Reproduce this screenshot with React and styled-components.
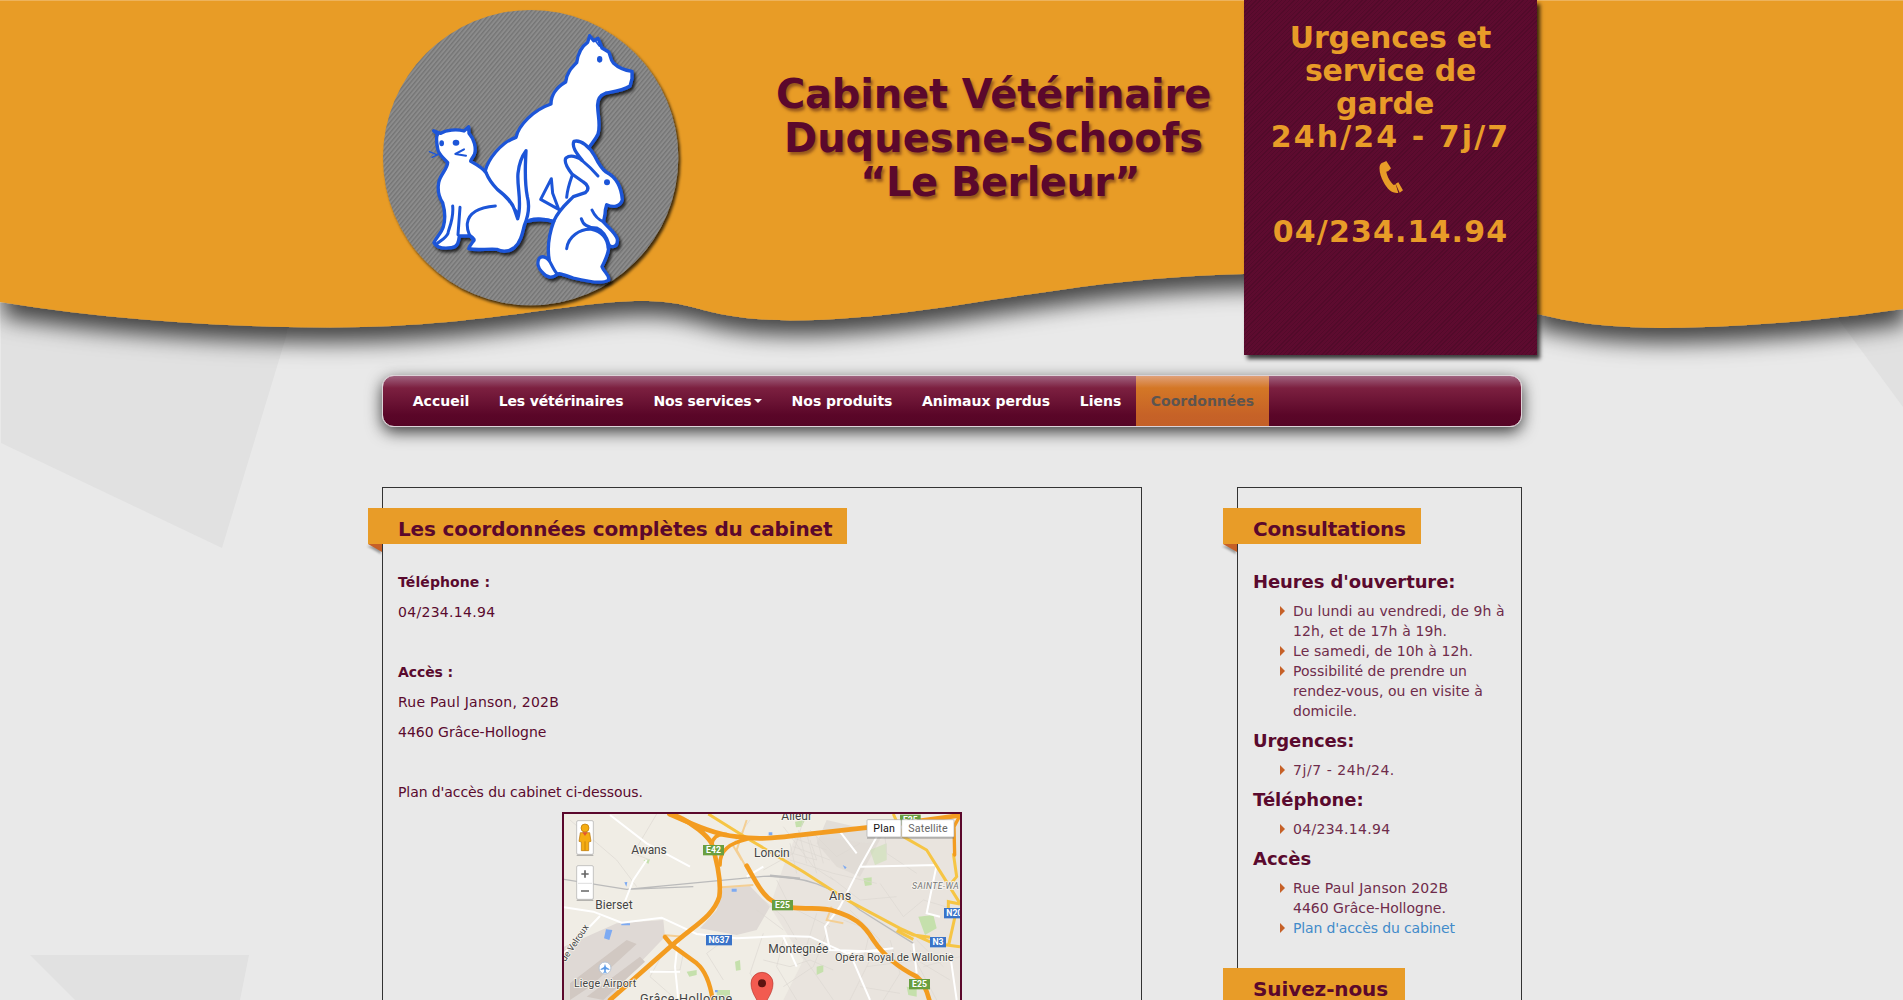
import React from "react";
import styled, { createGlobalStyle } from "styled-components";

const Global = createGlobalStyle`
  * { box-sizing: border-box; }
  html, body { margin: 0; padding: 0; background: #e9e9e9; }
  body {
    font-family: Verdana, "DejaVu Sans", sans-serif;
    font-size: 14px;
    line-height: 20px;
    color: #5a0a2e;
    overflow: hidden;
  }
  h1, h2, h3, p, ul { margin: 0; padding: 0; font-weight: inherit; }
`;

const Page = styled.div`
  position: relative;
  height: 1000px;
  overflow: hidden;
`;
const Backdrop = styled.svg`
  position: absolute;
  top: 0;
  left: 0;
  display: block;
`;
const Container = styled.div`
  position: relative;
  width: 1140px;
  margin-left: 382px;
`;
const Header = styled.header`
  display: flex;
  height: 375px;
  width: 1155px;
`;
const LogoArt = styled.svg`
  display: block;
  flex: none;
  width: 330px;
  height: 320px;
  margin-left: -12px;
`;
const Title = styled.h1`
  display: flex;
  flex-direction: column;
  align-items: center;
  flex: 1;
  padding-top: 72px;
  padding-left: 43px;
  font-size: 40px;
  font-weight: bold;
  line-height: 44px;
  white-space: nowrap;
  color: #5b082c;
  text-shadow: 2px 3px 3px rgba(70, 20, 20, 0.5);
`;
const Emergency = styled.aside`
  display: flex;
  flex-direction: column;
  align-items: center;
  flex: none;
  width: 293px;
  height: 355px;
  padding-top: 21px;
  font-size: 30px;
  font-weight: bold;
  line-height: 33px;
  text-align: center;
  white-space: nowrap;
  color: #e89c28;
  background: repeating-linear-gradient(-45deg, #5d0b2f 0 2px, #520a2a 2px 3px);
  box-shadow: 3px 4px 4px rgba(0, 0, 0, 0.75);
`;
const Tracked = styled.span`
  letter-spacing: ${(p) => p.$track || 0}px;
`;
const Phone = styled.svg`
  width: 24px;
  height: 34px;
  margin: 8px 0 20px;
`;

const Nav = styled.nav`
  display: flex;
  height: 52px;
  width: 1140px;
  padding-left: 15px;
  overflow: hidden;
  border: 1px solid #ddd3d8;
  border-radius: 12px;
  background: linear-gradient(#a0627f 0, #7c2040 12px, #5a0628 39px, #560526 100%);
`;
const NavShadow = styled.div`
  border-radius: 12px;
  box-shadow: 0 5px 16px rgba(0, 0, 0, 0.75);
`;
const NavItem = styled.a`
  display: flex;
  align-items: center;
  justify-content: center;
  flex: none;
  width: ${(p) => p.$w}px;
  padding-bottom: 1px;
  font-weight: bold;
  letter-spacing: ${(p) => p.$track || 0}px;
  white-space: nowrap;
  color: ${(p) => (p.$active ? "#5c5550" : "#fff")};
  background: ${(p) =>
    p.$active ? "linear-gradient(#e0a078 0, #d47726 12px, #c66227 39px, #c46028 100%)" : "none"};
`;
const Caret = styled.i`
  margin-left: 2px;
  border-top: 4px solid #fff;
  border-left: 4px solid transparent;
  border-right: 4px solid transparent;
`;

const Columns = styled.div`
  display: flex;
  justify-content: space-between;
  margin-top: 60px;
`;
const Panel = styled.section`
  width: ${(p) => p.$w}px;
  height: 700px;
  padding: 20px 0 0 15px;
  border: 1px solid #333;
`;
const Ribbon = styled.h2`
  position: relative;
  width: ${(p) => p.$w}px;
  height: 36px;
  margin: ${(p) => p.$top || 0}px 0 ${(p) => p.$gap || 0}px -30px;
  padding: 10px 0 0 30px;
  font-size: 20px;
  font-weight: bold;
  line-height: 22px;
  letter-spacing: ${(p) => p.$track || 0}px;
  white-space: nowrap;
  color: #5b082c;
  background: #e89c28;

  &::after {
    content: "";
    position: absolute;
    left: 0;
    top: 36px;
    border-top: 8px solid #c66027;
    border-left: 14px solid transparent;
    filter: drop-shadow(-1px 2px 1px rgba(0, 0, 0, 0.35));
  }
`;
const Text = styled.p`
  height: 20px;
  margin-bottom: 10px;
  font-weight: ${(p) => (p.$bold ? "bold" : "normal")};
  letter-spacing: ${(p) => p.$track || 0}px;
`;
const SubTitle = styled.h3`
  margin: 10px 0;
  font-size: 18px;
  font-weight: bold;
  line-height: 19px;
  letter-spacing: ${(p) => p.$track || 0}px;
`;
const List = styled.ul`
  padding-left: 40px;
  list-style: none;
  color: #6f2c4b;
`;
const Item = styled.li`
  display: block;
  position: relative;
  white-space: nowrap;
  letter-spacing: ${(p) => p.$track || 0}px;

  &::before {
    content: "";
    position: absolute;
    left: -13px;
    top: 5px;
    border-left: 5px solid #c66027;
    border-top: 5px solid transparent;
    border-bottom: 5px solid transparent;
  }
`;
const Link = styled.a`
  color: #428bca;
`;
const MapFrame = styled.div`
  width: 400px;
  height: 250px;
  margin-left: 164px;
  border: 2px solid #5b082c;
  background: #f0ede5;
  svg { display: block; }
`;

const BLUE = "#1c55d8";

function Logo() {
  return (
    <LogoArt viewBox="0 0 990 960">
      <defs>
        <pattern id="stripes" width="10" height="10" patternUnits="userSpaceOnUse" patternTransform="rotate(40)">
          <rect width="10" height="10" fill="#8c8c8c" />
          <rect width="4" height="10" fill="#747474" />
        </pattern>
        <filter id="soft" x="-10%" y="-10%" width="125%" height="125%">
          <feDropShadow dx="6" dy="8" stdDeviation="4" floodColor="#000" floodOpacity="0.75" />
        </filter>
      </defs>
      <circle cx="482" cy="473" r="443" fill="url(#stripes)" filter="url(#soft)" />
      <g fill="#fff" stroke={BLUE} strokeWidth="10" strokeLinejoin="round" strokeLinecap="round">
        <g filter="url(#soft)">
          <path d="M659 107L671 122L684 115L696 144L716 156C722 166 721 181 730 189C746 204 763 211 786 214L786 236L780 258C760 271 730 275 708 279C688 286 681 302 683 322C684 350 692 376 684 402C676 420 667 428 658 441L650 660L560 668C530 656 500 656 470 664L360 560L346 512C354 480 390 428 438 412C446 376 490 330 543 312C543 290 556 264 587 246C590 220 602 206 620 188C624 160 632 141 653 127Z" />
          <path d="M191 392L203 397L212 400C228 390 260 386 282 393L296 380L297 400C312 416 320 446 313 463C308 474 302 480 302 484C320 494 336 502 348 518C356 538 366 552 382 568C410 590 426 606 434 630L443 656C458 610 440 560 444 520C448 480 462 460 468 452C466 500 462 540 472 590C480 620 474 650 463 676C456 706 450 728 434 742C416 756 396 756 380 748C350 746 320 752 296 746C296 738 310 728 312 718C302 706 298 706 294 708L268 708C266 724 264 742 244 743C222 746 200 744 192 728C198 712 214 700 220 680C226 660 226 636 218 608C206 590 202 572 206 548C210 524 232 508 233 488C220 472 205 464 203 446C200 430 198 410 203 403Z" />
          <path d="M612 424C632 418 658 440 674 468C688 496 696 508 708 516C736 530 754 560 757 600C750 622 728 622 710 614L706 630C706 646 702 656 700 666C716 684 738 700 742 718C744 740 730 744 716 736C718 760 706 778 696 800C702 818 718 822 716 840C700 852 650 844 610 834C584 826 566 816 560 824C546 836 530 832 520 820C504 806 500 788 508 774C518 766 530 772 538 782C530 740 538 700 552 662C566 630 588 612 610 590L646 578C662 566 650 552 640 546L606 522C592 504 580 486 588 474C600 464 620 470 636 480C620 460 604 440 612 424Z" />
        </g>
        <g fill="none" strokeWidth="9">
          <path d="M634 480C646 490 660 500 684 528M606 528C598 550 592 570 590 592M544 536L512 598L566 628L548 580Z" />
          <path d="M480 660C510 650 540 662 552 664M376 618C330 622 296 636 292 670C290 696 302 712 312 722M248 618C252 660 234 690 234 700C228 714 214 720 200 732M270 622L264 704" />
          <path d="M666 630C674 648 686 660 702 666M634 656C640 680 660 684 680 684C700 692 712 716 718 736M590 746C594 710 630 686 664 688C690 694 712 712 714 744M538 782C546 796 552 812 562 822" />
          <path d="M282 448L256 462L288 467" strokeWidth="6" />
          <path d="M178 455L200 464M186 472L204 464" strokeWidth="4" />
          <path d="M676 122L688 138" strokeWidth="5" />
        </g>
        <g fill={BLUE} stroke="none">
          <ellipse cx="689" cy="178" rx="8" ry="10" />
          <ellipse cx="215" cy="430" rx="7" ry="9" />
          <ellipse cx="258" cy="428" rx="10" ry="9" />
          <circle cx="711" cy="547" r="9" />
        </g>
      </g>
    </LogoArt>
  );
}

function Shield({ x, y, w, color, children }) {
  return (
    <g>
      <rect x={x} y={y} width={w} height="31" fill={color} />
      <text x={x + w / 2} y={y + 25} textAnchor="middle" fill="#fff" fontSize="26" fontWeight="bold" stroke="none">
        {children}
      </text>
    </g>
  );
}

function CityMap() {
  return (
    <svg width="396" height="186" viewBox="42 42 1188 558" fontFamily="Roboto, sans-serif">
      <rect x="42" y="42" width="1188" height="558" fill="#f0ede5" />
      <g fill="#dfd9d5">
        <path d="M520 262L600 258L660 320L620 390L560 405L450 385L500 330Z" />
        <path d="M42 440L200 370L340 360L345 410L240 520L180 600L42 600Z" />
        <path d="M830 60L1000 100L930 230L860 200L800 130Z" opacity=".8" />
        <path d="M740 100L950 130L1230 60V600H700L760 480L660 320L700 200Z" opacity=".45" />
      </g>
      <g fill="#d1c8c2">
        <path d="M60 550L230 420L260 432L120 560L60 600ZM110 590L270 470L285 485L160 600Z" />
      </g>
      <g fill="#c5e0ac">
        <path d="M1105 350L1150 345L1160 385L1125 405ZM940 235L965 232V255L945 258ZM555 485L570 480L572 510L558 512ZM410 515L440 510V525L418 530ZM500 570H540V600H500ZM800 500L820 495V515L800 525ZM735 65L765 60L755 80L738 82ZM1070 560L1100 565V590L1075 585ZM280 180L300 178L295 192Z" />
        <path d="M960 150L1010 130V180L975 195Z" opacity=".5" />
      </g>
      <g fill="#7daaf2">
        <path d="M168 388L187 390L178 420L162 415ZM440 85L466 92L460 102ZM656 97H667V106H656ZM223 247L232 246L229 260ZM545 266H560V275H545ZM214 370H240V376H214ZM878 195L890 202L885 208ZM495 570H503V577H495Z" />
      </g>
      <g fill="none" stroke="#dcd8d1" strokeWidth="2">
        <path d="M60 60L200 180L260 260M320 42L250 160L300 180M700 80L790 200L850 240M760 60L730 160L640 210M690 150L800 180L780 120M680 240L720 320L840 380M640 400L600 520L650 600M800 340L760 470L850 600M900 330L990 420L900 600M990 250L1060 350L1120 300L1220 330M950 500L1100 480L1200 540M780 90L860 170L930 130M720 180L850 220L980 250M830 400L790 500L700 560M550 400L470 460L520 540M350 440L300 530L380 600M1000 60L1010 160L1100 220M640 480L720 500L780 480L850 510M1020 420L1050 520L1000 600M700 420L680 500L740 600M640 300L700 350L740 420M840 230L930 300L1040 290" />
        <path d="M720 130L740 220M745 90L770 190M770 100L800 220M800 110L820 190M720 110L830 150M730 140L840 180M1100 420L1180 500M1080 450L1160 600M1120 500L1230 470M930 560L1050 580M600 60L550 130M400 460L390 510L300 515M620 330L700 390M880 360L960 390L940 480" />
      </g>
      <g fill="none" stroke="#bbb" strokeWidth="4">
        <path d="M42 238L230 268L430 260M230 268L640 229C760 225 850 260 930 330L1090 430" />
        <path d="M660 227L750 236" strokeWidth="7" />
      </g>
      <g fill="none" stroke="#fff" strokeWidth="6">
        <path d="M42 322L130 335L215 368L335 353L440 402L560 415L700 408L780 410L890 460L1030 445M180 45L290 130L420 200M150 348L42 460M290 180L250 240L215 330M385 410L375 500L385 600M300 515H390M1000 75L930 200L870 320L825 380L840 450L1000 455M930 200L1160 195M870 95L920 160M1160 195L1130 340L1170 350M900 460L960 600M1090 430L1100 520M700 410L740 500M1200 460L1220 600M640 200L590 230" />
      </g>
      <g fill="none" stroke="#f4cf94" strokeWidth="6">
        <path d="M515 262L610 255M590 60L560 150L590 205M545 130L575 180M340 405L400 410M845 320L830 360L880 370" />
      </g>
      <g fill="none" stroke="#f6c544" strokeWidth="9">
        <path d="M475 42L600 120L760 215L900 305L1050 385L1150 430L1230 440M1030 42L1060 110L1130 150L1180 230L1230 310M1210 160L1220 230L1195 260M1230 312L1195 305V330M1045 385L1090 405L1140 412M1040 392L1090 418M1215 350L1195 440" />
      </g>
      <g fill="none" stroke="#f39c20" strokeWidth="14" strokeLinecap="round">
        <path d="M358 42C440 78 500 105 560 110C640 122 700 110 760 104L1010 76L1230 46" />
        <path d="M380 48C430 70 470 106 484 128C500 180 515 240 508 290C490 350 430 378 366 436L180 600" />
        <path d="M510 195C508 150 540 130 590 118M485 132C490 110 505 100 530 104" strokeWidth="11" />
        <path d="M590 197C620 250 640 290 672 306L720 322C780 328 820 322 850 332C910 350 940 370 970 420C1010 480 1060 510 1100 530C1120 545 1130 570 1138 600" />
        <path d="M345 411L366 436L440 490C470 515 482 560 488 600" strokeWidth="13" />
        <path d="M1228 50L1212 80L1214 165" strokeWidth="10" />
      </g>
      <Shield x={459} y={135} w={63} color="#699f40">E42</Shield>
      <Shield x={666} y={300} w={63} color="#699f40">E25</Shield>
      <Shield x={1050} y={44} w={62} color="#699f40">E25</Shield>
      <Shield x={1077} y={537} w={63} color="#699f40">E25</Shield>
      <Shield x={468} y={405} w={78} color="#3973c8">N637</Shield>
      <Shield x={1140} y={411} w={48} color="#3973c8">N3</Shield>
      <Shield x={1182} y={324} w={62} color="#3973c8">N20</Shield>
      <g fill="#444" stroke="#f6f4ee" strokeWidth="5" paintOrder="stroke" fontSize="36">
        <text x="244" y="163" textLength="106">Awans</text>
        <text x="612" y="171" textLength="107">Loncin</text>
        <text x="694" y="60" textLength="92">Alleur</text>
        <text x="136" y="327" textLength="112">Bierset</text>
        <text x="837" y="301" fontSize="38" textLength="67">Ans</text>
        <text x="655" y="459" textLength="180">Montegnée</text>
        <text x="855" y="484" fontSize="33" textLength="356">Opéra Royal de Wallonie</text>
        <text x="72" y="560" fontSize="32" textLength="187">Liege Airport</text>
        <text x="270" y="610" fontSize="38" textLength="277">Grâce-Hollogne</text>
        <text x="1086" y="267" fontSize="26" fill="#777" fontStyle="italic" textLength="140">SAINTE-WA</text>
        <text transform="translate(46 486) rotate(-56)" fontSize="27">de Velroux</text>
      </g>
      <circle cx="165" cy="504" r="18" fill="#fff" stroke="#b7c4d4" strokeWidth="3" />
      <path d="M165 491L168 501L178 507V510L168 508L167 514L171 518H159L163 514L162 508L152 510V507L162 501Z" fill="#5b9be8" />
      <g>
        <path d="M636 640C632 605 603 586 603 550A33 33 0 0 1 669 550C669 586 640 605 636 640Z" fill="#f25b50" stroke="#b8352c" strokeWidth="2" />
        <circle cx="636" cy="550" r="12" fill="#5d1411" />
      </g>
      <g stroke="#aaa" strokeWidth="2" fill="#fff">
        <rect x="80" y="62" width="50" height="101" rx="4" />
        <rect x="80" y="197" width="50" height="101" rx="4" />
        <path d="M84 250H126" stroke="#ccc" />
        <rect x="951" y="59" width="102" height="52" rx="3" />
        <rect x="1055" y="59" width="157" height="52" rx="3" />
      </g>
      <path d="M80 166H130M80 301H130M951 114H1212" stroke="#777" strokeOpacity=".5" strokeWidth="4" />
      <path d="M94 222H116M105 211V233M93 273H117" stroke="#666" strokeWidth="5" />
      <g fill="#f5ad12" stroke="#b57208" strokeWidth="2">
        <path d="M91 98H119L123 124L116 126V152H94V126L87 124Z" />
        <circle cx="105" cy="84" r="12" />
        <path d="M97 97H113L105 108Z" fill="#e4572e" stroke="none" />
        <path d="M105 124V151" />
      </g>
      <text x="970" y="96" fontSize="32" fill="#111" textLength="65">Plan</text>
      <text x="1075" y="96" fontSize="32" fill="#666" textLength="118">Satellite</text>
    </svg>
  );
}

const NAV = [
  { label: "Accueil", w: 86 },
  { label: "Les vétérinaires", w: 154, track: -0.15 },
  { label: "Nos services", w: 139, track: -0.1, caret: true },
  { label: "Nos produits", w: 130 },
  { label: "Animaux perdus", w: 158 },
  { label: "Liens", w: 71 },
  { label: "Coordonnées", w: 133, active: true },
];

export default function App() {
  return (
    <Page>
      <Global />
      <Backdrop width="1903" height="1000">
        <defs>
          <filter id="waveShadow" x="-2%" y="-5%" width="104%" height="130%">
            <feDropShadow dx="3" dy="15" stdDeviation="11" floodColor="#000" floodOpacity="0.7" />
          </filter>
        </defs>
        <g fill="#e1e1e1">
          <path d="M1 280H296L286 337L222 548L1 443Z" />
          <path d="M30 955H249L240 1000H75Z" />
          <path d="M1836 316V300H1903V407Z" />
        </g>
        <path
          filter="url(#waveShadow)"
          fill="#e89c28"
          d="M0 0H1903V309C1800 324 1710 328 1660 328C1610 327 1575 324 1530 312V274H1244C1150 277 1100 284 1032 294C960 304 880 320 790 320.5C700 319 700 301 643 301C570 301 480 327.500 330 327.500C220 327 110 320 0 302Z"
        />
        <rect width="1903" height="1" fill="#edb35c" />
      </Backdrop>
      <Container>
        <Header>
          <Logo />
          <Title>
            <Tracked $track={-0.2}>Cabinet Vétérinaire</Tracked>
            <Tracked>Duquesne-Schoofs</Tracked>
            <Tracked $track={-0.55}>&nbsp;“Le Berleur”</Tracked>
          </Title>
          <Emergency>
            <Tracked $track={-0.2}>Urgences et</Tracked>
            <Tracked $track={-0.2}>service de</Tracked>
            <Tracked>garde&nbsp;</Tracked>
            <Tracked $track={2.1}>24h/24 - 7j/7</Tracked>
            <Phone viewBox="0 0 72 102" fill="#e89c28">
              <path d="M14 4L22 0L36 22L28 30L22 32C24 46 34 62 44 72L50 70L58 96C40 98 26 86 14 64C2 42 -4 14 8 6ZM50 68L58 64L72 88L62 95Z" />
            </Phone>
            <Tracked $track={1.15}>04/234.14.94</Tracked>
          </Emergency>
        </Header>
        <NavShadow>
          <Nav>
            {NAV.map((n) => (
              <NavItem key={n.label} $w={n.w} $track={n.track} $active={n.active}>
                {n.label}
                {n.caret && <Caret />}
              </NavItem>
            ))}
          </Nav>
        </NavShadow>
        <Columns>
          <Panel $w={760}>
            <Ribbon $w={479} $gap={28} $track={-0.14}>Les coordonnées complètes du cabinet</Ribbon>
            <Text $bold $track={0.1}>Téléphone :</Text>
            <Text $track={0.3}>04/234.14.94</Text>
            <Text />
            <Text $bold $track={-0.1}>Accès :</Text>
            <Text $track={0.23}>Rue Paul Janson, 202B</Text>
            <Text>4460 Grâce-Hollogne</Text>
            <Text />
            <Text $track={-0.09}>Plan d'accès du cabinet ci-dessous.</Text>
            <MapFrame>
              <CityMap />
            </MapFrame>
          </Panel>
          <Panel $w={285}>
            <Ribbon $w={198} $gap={28} $track={-0.17}>Consultations</Ribbon>
            <SubTitle $track={-0.1}>Heures d'ouverture:</SubTitle>
            <List>
              <Item $track={0.13}>
                Du lundi au vendredi, de 9h à
                <br />
                12h, et de 17h à 19h.
              </Item>
              <Item $track={0.1}>Le samedi, de 10h à 12h.</Item>
              <Item $track={0.04}>
                Possibilité de prendre un
                <br />
                rendez-vous, ou en visite à
                <br />
                domicile.
              </Item>
            </List>
            <SubTitle $track={-0.1}>Urgences:</SubTitle>
            <List>
              <Item $track={0.56}>7j/7 - 24h/24.</Item>
            </List>
            <SubTitle>Téléphone:</SubTitle>
            <List>
              <Item $track={0.3}>04/234.14.94</Item>
            </List>
            <SubTitle>Accès</SubTitle>
            <List>
              <Item>
                <Tracked $track={0.18}>Rue Paul Janson 202B</Tracked>
                <br />
                4460 Grâce-Hollogne.
              </Item>
              <Item $track={-0.16}>
                <Link>Plan d'accès du cabinet</Link>
              </Item>
            </List>
            <Ribbon $w={182} $top={30} $track={-0.1}>Suivez-nous</Ribbon>
          </Panel>
        </Columns>
      </Container>
    </Page>
  );
}
